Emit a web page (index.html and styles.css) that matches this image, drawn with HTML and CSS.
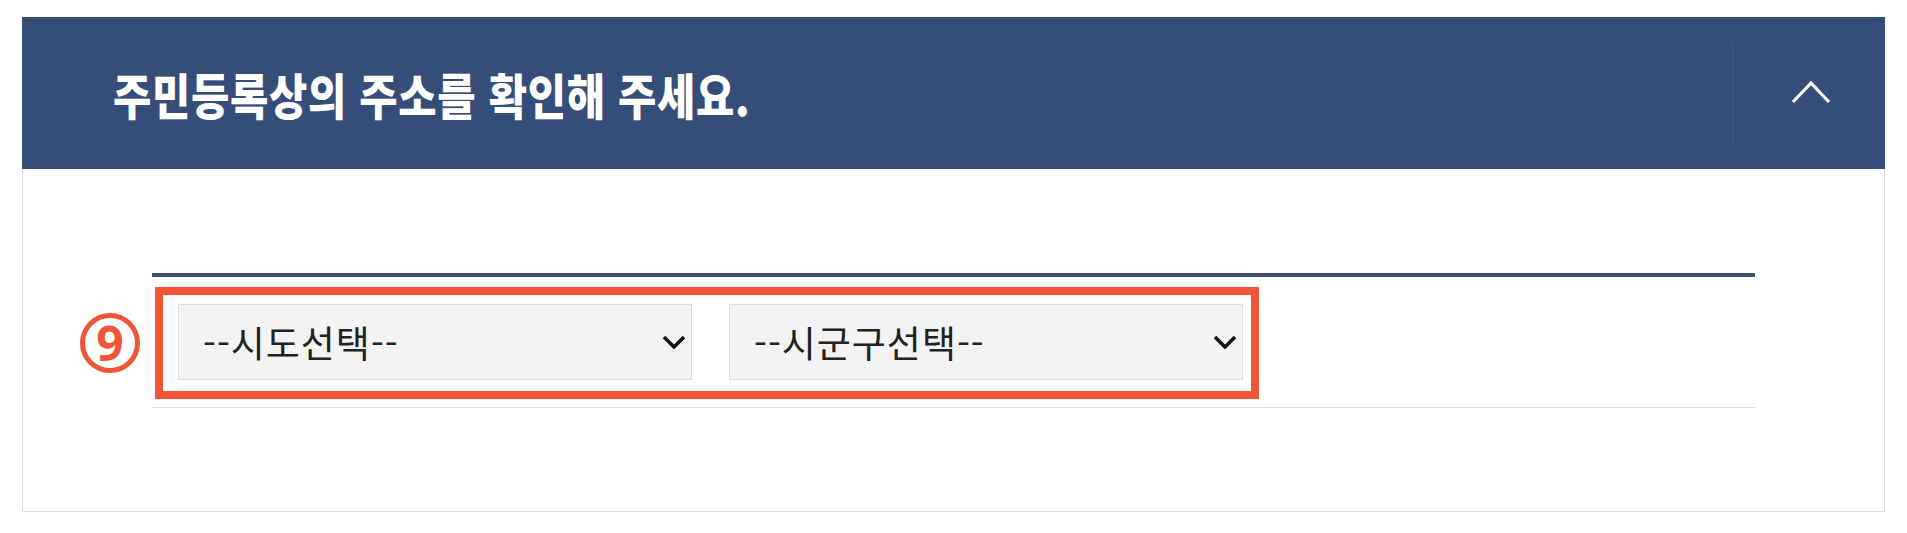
FILE: index.html
```html
<!DOCTYPE html>
<html lang="ko">
<head>
<meta charset="utf-8">
<title>주소 확인</title>
<link rel="stylesheet" href="styles.css">
</head>
<body>
<section class="panel">
  <header class="panel-head">
    <h2 class="panel-title"><span class="title-text">주민등록상의 주소를 확인해 주세요.</span></h2>
    <button class="toggle" type="button" aria-label="접기">
      <svg class="toggle-icon" width="40" height="24" viewBox="0 0 40 24" aria-hidden="true">
        <polyline points="2,22 20,3 38,22" fill="none" stroke="#ffffff" stroke-width="3.2"/>
      </svg>
    </button>
  </header>
  <div class="panel-body">
    <div class="addr-table">
      <div class="addr-row">
        <span class="step-badge">9</span>
        <div class="highlight">
          <label class="select-wrap">
            <select class="addr-select"><option>--시도선택--</option></select>
            <svg class="select-arrow" width="24" height="14" viewBox="0 0 24 14" aria-hidden="true">
              <polyline points="2,2 12,12 22,2" fill="none" stroke="#111" stroke-width="3.5"/>
            </svg>
          </label>
          <label class="select-wrap">
            <select class="addr-select"><option>--시군구선택--</option></select>
            <svg class="select-arrow" width="24" height="14" viewBox="0 0 24 14" aria-hidden="true">
              <polyline points="2,2 12,12 22,2" fill="none" stroke="#111" stroke-width="3.5"/>
            </svg>
          </label>
        </div>
      </div>
    </div>
  </div>
</section>
</body>
</html>
```
FILE: styles.css
```css
html, body {
  margin: 0;
  padding: 0;
  background: #ffffff;
}

body {
  font-family: "Noto Sans CJK KR", "Noto Sans", sans-serif;
}

.panel {
  margin: 17px 0 0 22px;
  width: 1863px;
  box-sizing: border-box;
  border: 1px solid #dcdcdc;
  border-top: none;
}

.panel-head {
  height: 152px;
  background: #344d79;
  display: flex;
  align-items: center;
  justify-content: space-between;
  margin: 0 -1px;
}

.panel-title {
  margin: 0 0 0 91px;
  font-size: 49px;
  font-weight: 900;
  color: #ffffff;
  letter-spacing: 0.8px;
  white-space: nowrap;
  line-height: 1;
}

.title-text {
  display: inline-block;
  transform: scaleX(0.85);
  transform-origin: left center;
}

.toggle {
  width: 153px;
  height: 102px;
  border: none;
  border-left: 1px solid #44598a;
  background: transparent;
  padding: 0;
  display: flex;
  align-items: center;
  justify-content: center;
  cursor: pointer;
}

.toggle-icon {
  display: block;
  margin-left: 4px;
  margin-bottom: 2px;
}

.panel-body {
  padding: 104px 129px 103px 129px;
}

.addr-table {
  border-top: 4px solid #3d5272;
  border-bottom: 1px solid #dddddd;
}

.addr-row {
  position: relative;
  padding: 10px 0 8px 3px;
}

.step-badge {
  position: absolute;
  left: -72px;
  top: 36px;
  width: 60px;
  height: 60px;
  box-sizing: border-box;
  border: 5px solid #f05537;
  border-radius: 50%;
  color: #f05537;
  font-family: "Noto Sans", "Open Sans", sans-serif;
  font-weight: 700;
  font-size: 48px;
  line-height: 49px;
  text-align: center;
}

.highlight {
  width: 1104px;
  box-sizing: border-box;
  border: 8px solid #f05537;
  padding: 9px 8px 11px 15px;
  display: flex;
  gap: 37px;
}

.select-wrap {
  position: relative;
  display: block;
  width: 514px;
  height: 76px;
}

.addr-select {
  appearance: none;
  -webkit-appearance: none;
  width: 100%;
  height: 100%;
  box-sizing: border-box;
  background: #f3f3f3;
  border: 1px solid #dddddd;
  border-radius: 0;
  padding: 0 0 0 24px;
  margin: 0;
  font-family: "Noto Sans CJK KR", "Noto Sans", sans-serif;
  font-size: 37px;
  letter-spacing: 1px;
  color: #222222;
  outline: none;
}

.select-arrow {
  position: absolute;
  right: 6px;
  top: 31px;
  pointer-events: none;
}
```
